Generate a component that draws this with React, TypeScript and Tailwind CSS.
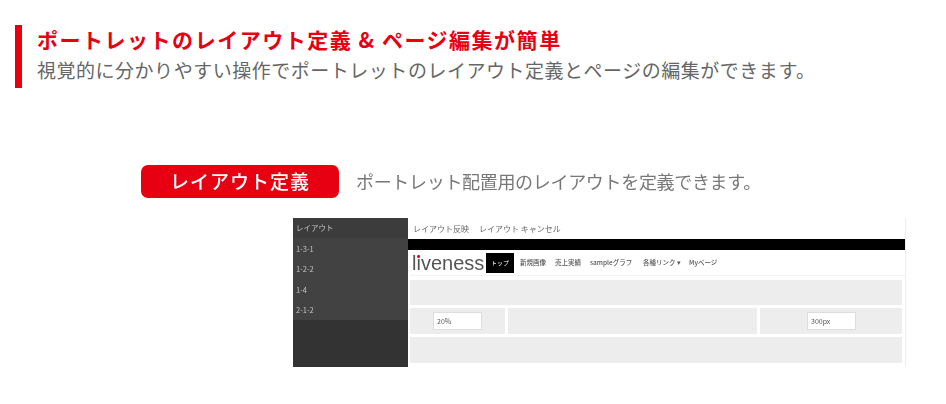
import React from 'react';

const jp = "font-['Noto_Sans_CJK_JP','Noto_Sans',sans-serif]";

const sideRows = ['1-3-1', '1-2-2', '1-4', '2-1-2'];

const Cell = ({ w, label, pl }: { w: string; label?: string; pl?: string }) => (
  <div className={`${w} ${pl ?? ''} h-full bg-[#ededed] flex items-center`}>
    {label && (
      <div className="w-[49px] h-[18px] bg-white border border-[#dddddd] flex items-center pl-[3px] text-[7px] text-[#555555]">
        {label}
      </div>
    )}
  </div>
);

const LayoutShot = () => (
  <div className="ml-[293px] mt-[20px] w-[613px] h-[149px] flex blur-[0.7px] border-r border-[#eeeeee]">
    <aside className="w-[115px] bg-[#333333] text-[7.5px] text-[#c4c4c4]">
      <div className="h-[20px] bg-[#3c3c3c] flex items-center pl-[3px]">レイアウト</div>
      {sideRows.map((r) => (
        <div key={r} className="h-[20.5px] bg-[#424242] flex items-center pl-[3px]">{r}</div>
      ))}
    </aside>
    <div className="flex-1 pl-[2px]">
      <div className="h-[21px] flex items-center gap-[10px] pl-[3px] text-[8px] text-[#666666]">
        <span>レイアウト反映</span>
        <span>レイアウト キャンセル</span>
      </div>
      <div className="h-[11px] bg-black -ml-[2px]" />
      <div className="h-[26px] flex items-center border-b border-[#f2f2f2] pl-[2px]">
        <span className="relative font-['Liberation_Sans',sans-serif] text-[20px] leading-none text-[#555555] w-[74px]">
          liveness
          <span className="absolute left-[5px] top-[2px] w-[3px] h-[3px] rounded-full bg-[#e60012]" />
        </span>
        <span className="w-[28px] h-[20px] bg-black text-white text-[6px] flex items-center justify-center">トップ</span>
        <nav className="flex items-center text-[6.5px] text-[#555555] font-medium whitespace-nowrap">
          <span className="ml-[6px] w-[35px]">新規画像</span>
          <span className="w-[35px]">売上実績</span>
          <span className="w-[53px]">sampleグラフ</span>
          <span className="w-[46px]">各種リンク ▾</span>
          <span>Myページ</span>
        </nav>
      </div>
      <div className="mt-[4px] w-[492px] flex flex-col gap-[3px]">
        <div className="h-[25px] bg-[#ededed]" />
        <div className="h-[26px] flex gap-[3px]">
          <Cell w="w-[95px]" label="20%" pl="pl-[23px]" />
          <Cell w="w-[249px]" />
          <Cell w="w-[142px]" label="300px" pl="pl-[47px]" />
        </div>
        <div className="h-[26px] bg-[#ededed]" />
      </div>
    </div>
  </div>
);

export default function App() {
  return (
    <div className={`w-[946px] h-[404px] bg-white overflow-hidden pt-[25px] ${jp}`}>
      <section className="ml-[15px] h-[63px] border-l-[7px] border-[#e60012] pl-[15px]">
        <h2 className="text-[21px] leading-[28px] font-bold text-[#e60012] tracking-[1.52px]">
          ポートレットのレイアウト定義 &amp; ページ編集が簡単
        </h2>
        <p className="mt-[2px] text-[19px] leading-[30px] text-[#666666] tracking-[0.52px]">
          視覚的に分かりやすい操作でポートレットのレイアウト定義とページの編集ができます。
        </p>
      </section>
      <div className="mt-[77px] ml-[141px] h-[33px] flex items-center blur-[0.5px]">
        <div className="w-[198px] h-[33px] rounded-[7px] bg-[#e60012] text-white text-[19px] font-medium flex items-center justify-center tracking-[1px]">
          レイアウト定義
        </div>
        <p className="ml-[17px] text-[18px] text-[#777777] tracking-[-0.32px]">
          ポートレット配置用のレイアウトを定義できます。
        </p>
      </div>
      <LayoutShot />
    </div>
  );
}
